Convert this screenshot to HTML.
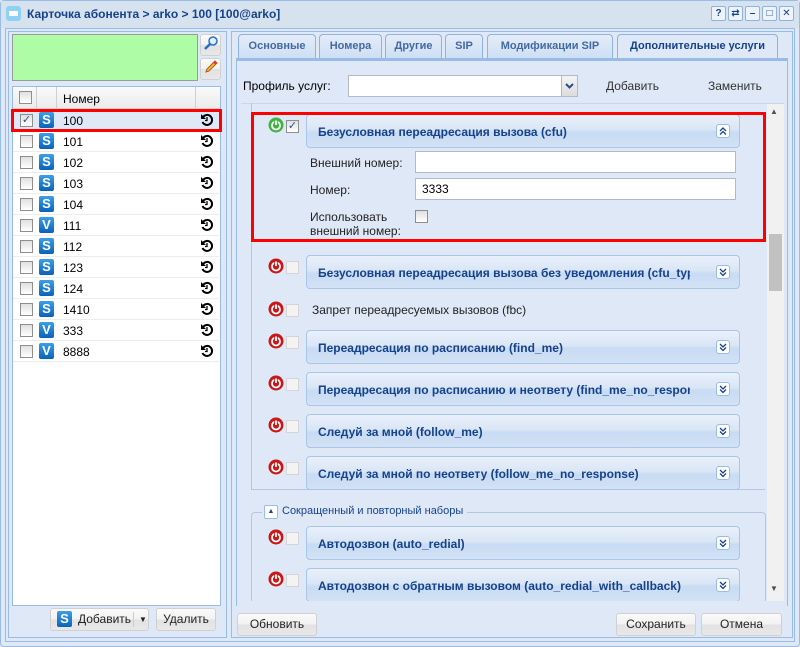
<!DOCTYPE html>
<html><head><meta charset="utf-8"><style>
*{box-sizing:border-box;margin:0;padding:0}
body{width:800px;height:647px;overflow:hidden;background:#dfe8f6;font-family:"Liberation Sans","DejaVu Sans",sans-serif;font-size:12px;color:#000;position:relative}
.a{position:absolute}
.btn{position:absolute;height:23px;border:1px solid #d0d0d0;border-radius:3px;background:linear-gradient(#fafafa,#f2f2f2 50%,#e2e2e2 51%,#e8e8e8);font-size:12px;color:#222;text-align:center;line-height:21px}
.cb{position:absolute;width:13px;height:13px;border:1px solid #8e8e8e;background:linear-gradient(#e0e0e0,#fff)}
.cbd{border-color:#d5d5d5;background:#f3f3f3}
.row{position:absolute;left:13px;width:206px;height:21px;border-bottom:1px solid #ededed;background:#fff}
.row .cb{left:7px;top:4px}
.ic{position:absolute;left:26px;top:2px;width:15px;height:16px;border-radius:2px;background:linear-gradient(#3aa0e8,#0a62b8);color:#fff;font-weight:bold;font-size:13px;line-height:16px;text-align:center}
.row .t{position:absolute;left:50px;top:4px}
.row svg{position:absolute;left:187px;top:3px}
.hd{position:absolute;left:306px;width:434px;height:34px;border:1px solid #a9c5ea;border-radius:4px;background:linear-gradient(#e9f0fa,#dae6f6 45%,#c7dbf3 55%,#d3e2f5);color:#15428b;font-weight:bold;font-size:12px;padding:10px 0 0 11px;white-space:nowrap;overflow:hidden}
.hd span{display:block;max-width:372px;overflow:hidden}
.hd .x{position:absolute;right:9px;top:9px;width:14px;height:14px;border:1px solid #99bbe8;border-radius:3px;background:#fff}
.pw{position:absolute;left:268px}
.tab{position:absolute;top:34px;height:24px;border:1px solid #8db2e3;border-bottom:none;border-radius:4px 4px 0 0;background:linear-gradient(#e4ecf7,#cedff5);color:#416aa3;font-weight:bold;font-size:11px;text-align:center;line-height:23px}
.inp{position:absolute;height:22px;border:1px solid #b5b8c8;background:#fff;padding:3px 6px}
.tb{width:15px;height:15px;border:1px solid #8db2e3;border-radius:2px;background:#eef3fa;color:#15428b;font-size:10px;font-weight:bold;text-align:center;line-height:13px}
</style></head><body>
<div class="a" style="left:0;top:0;width:800px;height:647px;border:1px solid #99bbe8;border-radius:4px"></div>
<div class="a" style="left:1px;top:1px;width:798px;height:27px;background:#d7e2ef"></div>
<div class="a" style="left:6px;top:6px;width:15px;height:15px;border-radius:3px;background:#8fd0f5"><div class="a" style="left:3px;top:5px;width:9px;height:5px;background:#fff"></div></div>
<div class="a" style="left:27px;top:7px;font-weight:bold;color:#15428b;font-size:12px">Карточка абонента &gt; arko &gt; 100 [100@arko]</div>
<div class="a" style="left:711px;top:6px;display:flex;gap:2px">
<div class="tb">?</div><div class="tb">⇄</div><div class="tb">–</div><div class="tb">□</div><div class="tb">✕</div>
</div>
<div class="a" style="left:5px;top:28px;width:790px;height:614px;border:1px solid #99bbe8"></div>

<div class="a" style="left:8px;top:31px;width:219px;height:607px;border:1px solid #99bbe8"></div>
<div class="a" style="left:12px;top:34px;width:186px;height:47px;background:#aefca6;border:1px solid #9a9a9a"></div>
<div class="btn" style="left:200px;top:34px;width:21px;height:22px;padding:0"><svg width="16" height="16" viewBox="0 0 16 16"><circle cx="10" cy="6" r="4" fill="#dff1ff" stroke="#2b6dc6" stroke-width="1.5"/><path d="M7 9L2 14" stroke="#2b6dc6" stroke-width="2.5"/></svg></div>
<div class="btn" style="left:200px;top:58px;width:21px;height:22px;padding:0"><svg width="16" height="16" viewBox="0 0 16 16"><path d="M12 2l2 2-8 8-3 1 1-3z" fill="#f5b73b" stroke="#b35a10"/><path d="M11 3l2 2" stroke="#e33" stroke-width="2"/></svg></div>
<div class="a" style="left:12px;top:86px;width:209px;height:520px;border:1px solid #99bbe8;background:#fff"></div>
<div class="a" style="left:13px;top:87px;width:207px;height:22px;background:linear-gradient(#fafafa,#ebebeb);border-bottom:1px solid #d0d0d0"></div>
<div class="a" style="left:36px;top:87px;width:1px;height:22px;background:#d0d0d0"></div>
<div class="a" style="left:56px;top:87px;width:1px;height:22px;background:#d0d0d0"></div>
<div class="a" style="left:195px;top:87px;width:1px;height:22px;background:#d0d0d0"></div>
<div class="cb" style="left:19px;top:91px"></div>
<div class="a" style="left:63px;top:92px">Номер</div>
<div class="a" style="left:36px;top:110px;width:1px;height:252px;background:#ececec"></div>

<div class="row" style="top:110px;background:#dfe8f6"><div class="cb" style="font-size:11px;line-height:10px;color:#2a4f9a;text-align:center">✓</div><div class="ic">S</div><div class="t">100</div><svg width="14" height="14" viewBox="0 0 14 14"><path d="M3 4A5 5 0 1 1 2.5 9" fill="none" stroke="#000" stroke-width="2"/><path d="M1 1v5h5z" fill="#000"/><path d="M7 4v3.5h-2" fill="none" stroke="#000" stroke-width="1.3"/></svg></div>
<div class="row" style="top:131px"><div class="cb"></div><div class="ic">S</div><div class="t">101</div><svg width="14" height="14" viewBox="0 0 14 14"><path d="M3 4A5 5 0 1 1 2.5 9" fill="none" stroke="#000" stroke-width="2"/><path d="M1 1v5h5z"/><path d="M7 4v3.5h-2" fill="none" stroke="#000" stroke-width="1.3"/></svg></div>
<div class="row" style="top:152px"><div class="cb"></div><div class="ic">S</div><div class="t">102</div><svg width="14" height="14" viewBox="0 0 14 14"><path d="M3 4A5 5 0 1 1 2.5 9" fill="none" stroke="#000" stroke-width="2"/><path d="M1 1v5h5z"/><path d="M7 4v3.5h-2" fill="none" stroke="#000" stroke-width="1.3"/></svg></div>
<div class="row" style="top:173px"><div class="cb"></div><div class="ic">S</div><div class="t">103</div><svg width="14" height="14" viewBox="0 0 14 14"><path d="M3 4A5 5 0 1 1 2.5 9" fill="none" stroke="#000" stroke-width="2"/><path d="M1 1v5h5z"/><path d="M7 4v3.5h-2" fill="none" stroke="#000" stroke-width="1.3"/></svg></div>
<div class="row" style="top:194px"><div class="cb"></div><div class="ic">S</div><div class="t">104</div><svg width="14" height="14" viewBox="0 0 14 14"><path d="M3 4A5 5 0 1 1 2.5 9" fill="none" stroke="#000" stroke-width="2"/><path d="M1 1v5h5z"/><path d="M7 4v3.5h-2" fill="none" stroke="#000" stroke-width="1.3"/></svg></div>
<div class="row" style="top:215px"><div class="cb"></div><div class="ic">V</div><div class="t">111</div><svg width="14" height="14" viewBox="0 0 14 14"><path d="M3 4A5 5 0 1 1 2.5 9" fill="none" stroke="#000" stroke-width="2"/><path d="M1 1v5h5z"/><path d="M7 4v3.5h-2" fill="none" stroke="#000" stroke-width="1.3"/></svg></div>
<div class="row" style="top:236px"><div class="cb"></div><div class="ic">S</div><div class="t">112</div><svg width="14" height="14" viewBox="0 0 14 14"><path d="M3 4A5 5 0 1 1 2.5 9" fill="none" stroke="#000" stroke-width="2"/><path d="M1 1v5h5z"/><path d="M7 4v3.5h-2" fill="none" stroke="#000" stroke-width="1.3"/></svg></div>
<div class="row" style="top:257px"><div class="cb"></div><div class="ic">S</div><div class="t">123</div><svg width="14" height="14" viewBox="0 0 14 14"><path d="M3 4A5 5 0 1 1 2.5 9" fill="none" stroke="#000" stroke-width="2"/><path d="M1 1v5h5z"/><path d="M7 4v3.5h-2" fill="none" stroke="#000" stroke-width="1.3"/></svg></div>
<div class="row" style="top:278px"><div class="cb"></div><div class="ic">S</div><div class="t">124</div><svg width="14" height="14" viewBox="0 0 14 14"><path d="M3 4A5 5 0 1 1 2.5 9" fill="none" stroke="#000" stroke-width="2"/><path d="M1 1v5h5z"/><path d="M7 4v3.5h-2" fill="none" stroke="#000" stroke-width="1.3"/></svg></div>
<div class="row" style="top:299px"><div class="cb"></div><div class="ic">S</div><div class="t">1410</div><svg width="14" height="14" viewBox="0 0 14 14"><path d="M3 4A5 5 0 1 1 2.5 9" fill="none" stroke="#000" stroke-width="2"/><path d="M1 1v5h5z"/><path d="M7 4v3.5h-2" fill="none" stroke="#000" stroke-width="1.3"/></svg></div>
<div class="row" style="top:320px"><div class="cb"></div><div class="ic">V</div><div class="t">333</div><svg width="14" height="14" viewBox="0 0 14 14"><path d="M3 4A5 5 0 1 1 2.5 9" fill="none" stroke="#000" stroke-width="2"/><path d="M1 1v5h5z"/><path d="M7 4v3.5h-2" fill="none" stroke="#000" stroke-width="1.3"/></svg></div>
<div class="row" style="top:341px"><div class="cb"></div><div class="ic">V</div><div class="t">8888</div><svg width="14" height="14" viewBox="0 0 14 14"><path d="M3 4A5 5 0 1 1 2.5 9" fill="none" stroke="#000" stroke-width="2"/><path d="M1 1v5h5z"/><path d="M7 4v3.5h-2" fill="none" stroke="#000" stroke-width="1.3"/></svg></div>
<div class="a" style="left:11px;top:109px;width:211px;height:23px;border:3px solid #f00"></div>

<div class="btn" style="left:50px;top:608px;width:99px;text-align:left;padding-left:27px">Добавить<div class="ic" style="left:6px;top:2px">S</div><div class="a" style="left:82px;top:3px;width:1px;height:15px;background:#ccc"></div><div class="a" style="left:88px;top:0;font-size:8px">▼</div></div>
<div class="btn" style="left:156px;top:608px;width:60px">Удалить</div>

<div class="a" style="left:231px;top:31px;width:562px;height:607px;border:1px solid #99bbe8"></div>
<div class="tab" style="left:238px;width:78px">Основные</div>
<div class="tab" style="left:319px;width:63px">Номера</div>
<div class="tab" style="left:385px;width:57px">Другие</div>
<div class="tab" style="left:445px;width:38px">SIP</div>
<div class="tab" style="left:487px;width:126px">Модификации SIP</div>
<div class="tab" style="left:617px;width:161px;background:#dfe8f6;color:#15428b;height:25px">Дополнительные услуги</div>
<div class="a" style="left:236px;top:58px;width:552px;height:548px;border:1px solid #99bbe8;border-top:3px solid #99bbe8;background:#dfe8f6"></div>
<div class="a" style="left:243px;top:79px">Профиль услуг:</div>
<div class="inp" style="left:348px;top:75px;width:230px"></div>
<div class="a" style="left:561px;top:76px;width:16px;height:20px;background:linear-gradient(#f4f4f4,#dcdcdc);border-left:1px solid #b5b8c8"><svg width="15" height="20" viewBox="0 0 15 20"><path d="M4 8l3.5 3.5L11 8" fill="none" stroke="#2b4a8a" stroke-width="2"/></svg></div>
<div class="a" style="left:606px;top:79px;color:#333">Добавить</div>
<div class="a" style="left:708px;top:79px;color:#333">Заменить</div>

<div class="a" style="left:241px;top:103px;width:543px;height:498px;border-top:1px solid #c9d7ea;background:#dfe8f6"></div>
<div class="a" style="left:251px;top:103px;width:1px;height:387px;background:#b5c7df"></div>
<div class="a" style="left:251px;top:489px;width:514px;height:1px;background:#b5c7df"></div>
<div class="a" style="left:767px;top:104px;width:17px;height:497px;background:#f1f1f1"></div>
<div class="a" style="left:769px;top:234px;width:13px;height:57px;background:#c1c1c1"></div>
<div class="a" style="left:770px;top:107px;font-size:8px;color:#505050">▲</div>
<div class="a" style="left:770px;top:584px;font-size:8px;color:#505050">▼</div>

<svg class="pw" style="top:117px" width="16" height="16" viewBox="0 0 16 16"><circle cx="8" cy="8" r="7.5" fill="#3fb43f"/><circle cx="8" cy="8.5" r="4" fill="none" stroke="#fff" stroke-width="1.8"/><path d="M8 3v5" stroke="#3fb43f" stroke-width="3.5"/><path d="M8 3.5v4.5" stroke="#fff" stroke-width="1.8"/></svg>
<div class="cb" style="left:286px;top:120px;font-size:11px;line-height:10px;color:#2a4f9a;text-align:center">✓</div>
<div class="hd" style="top:114px"><span>Безусловная переадресация вызова (cfu)</span><div class="x"><svg width="12" height="12" viewBox="0 0 12 12"><path d="M3 6l3-3 3 3M3 9.5l3-3 3 3" fill="none" stroke="#15428b" stroke-width="1.3"/></svg></div></div>
<div class="a" style="left:310px;top:156px;color:#222">Внешний номер:</div>
<div class="inp" style="left:415px;top:151px;width:321px"></div>
<div class="a" style="left:310px;top:183px;color:#222">Номер:</div>
<div class="inp" style="left:415px;top:178px;width:321px">3333</div>
<div class="a" style="left:310px;top:210px;color:#222;line-height:14px">Использовать<br>внешний номер:</div>
<div class="cb" style="left:415px;top:210px"></div>
<div class="a" style="left:251px;top:112px;width:515px;height:130px;border:3px solid #f00"></div>

<svg class="pw" style="top:258px" width="16" height="16" viewBox="0 0 16 16"><circle cx="8" cy="8" r="7.5" fill="#c81818"/><circle cx="8" cy="8.5" r="4" fill="none" stroke="#fff" stroke-width="1.8"/><path d="M8 3v5" stroke="#c81818" stroke-width="3.5"/><path d="M8 3.5v4.5" stroke="#fff" stroke-width="1.8"/></svg>
<div class="cb cbd" style="left:286px;top:261px"></div>
<div class="hd" style="top:255px"><span>Безусловная переадресация вызова без уведомления (cfu_type2)</span><div class="x"><svg width="12" height="12" viewBox="0 0 12 12"><path d="M3 3l3 3 3-3M3 6.5l3 3 3-3" fill="none" stroke="#15428b" stroke-width="1.3"/></svg></div></div>

<svg class="pw" style="top:301px" width="16" height="16" viewBox="0 0 16 16"><circle cx="8" cy="8" r="7.5" fill="#c81818"/><circle cx="8" cy="8.5" r="4" fill="none" stroke="#fff" stroke-width="1.8"/><path d="M8 3v5" stroke="#c81818" stroke-width="3.5"/><path d="M8 3.5v4.5" stroke="#fff" stroke-width="1.8"/></svg>
<div class="cb cbd" style="left:286px;top:304px"></div>
<div class="a" style="left:312px;top:303px;color:#222">Запрет переадресуемых вызовов (fbc)</div>

<svg class="pw" style="top:333px" width="16" height="16" viewBox="0 0 16 16"><circle cx="8" cy="8" r="7.5" fill="#c81818"/><circle cx="8" cy="8.5" r="4" fill="none" stroke="#fff" stroke-width="1.8"/><path d="M8 3v5" stroke="#c81818" stroke-width="3.5"/><path d="M8 3.5v4.5" stroke="#fff" stroke-width="1.8"/></svg>
<div class="cb cbd" style="left:286px;top:336px"></div>
<div class="hd" style="top:330px"><span>Переадресация по расписанию (find_me)</span><div class="x"><svg width="12" height="12" viewBox="0 0 12 12"><path d="M3 3l3 3 3-3M3 6.5l3 3 3-3" fill="none" stroke="#15428b" stroke-width="1.3"/></svg></div></div>

<svg class="pw" style="top:375px" width="16" height="16" viewBox="0 0 16 16"><circle cx="8" cy="8" r="7.5" fill="#c81818"/><circle cx="8" cy="8.5" r="4" fill="none" stroke="#fff" stroke-width="1.8"/><path d="M8 3v5" stroke="#c81818" stroke-width="3.5"/><path d="M8 3.5v4.5" stroke="#fff" stroke-width="1.8"/></svg>
<div class="cb cbd" style="left:286px;top:378px"></div>
<div class="hd" style="top:372px"><span>Переадресация по расписанию и неответу (find_me_no_response)</span><div class="x"><svg width="12" height="12" viewBox="0 0 12 12"><path d="M3 3l3 3 3-3M3 6.5l3 3 3-3" fill="none" stroke="#15428b" stroke-width="1.3"/></svg></div></div>

<svg class="pw" style="top:417px" width="16" height="16" viewBox="0 0 16 16"><circle cx="8" cy="8" r="7.5" fill="#c81818"/><circle cx="8" cy="8.5" r="4" fill="none" stroke="#fff" stroke-width="1.8"/><path d="M8 3v5" stroke="#c81818" stroke-width="3.5"/><path d="M8 3.5v4.5" stroke="#fff" stroke-width="1.8"/></svg>
<div class="cb cbd" style="left:286px;top:420px"></div>
<div class="hd" style="top:414px"><span>Следуй за мной (follow_me)</span><div class="x"><svg width="12" height="12" viewBox="0 0 12 12"><path d="M3 3l3 3 3-3M3 6.5l3 3 3-3" fill="none" stroke="#15428b" stroke-width="1.3"/></svg></div></div>

<svg class="pw" style="top:459px" width="16" height="16" viewBox="0 0 16 16"><circle cx="8" cy="8" r="7.5" fill="#c81818"/><circle cx="8" cy="8.5" r="4" fill="none" stroke="#fff" stroke-width="1.8"/><path d="M8 3v5" stroke="#c81818" stroke-width="3.5"/><path d="M8 3.5v4.5" stroke="#fff" stroke-width="1.8"/></svg>
<div class="cb cbd" style="left:286px;top:462px"></div>
<div class="hd" style="top:456px"><span>Следуй за мной по неответу (follow_me_no_response)</span><div class="x"><svg width="12" height="12" viewBox="0 0 12 12"><path d="M3 3l3 3 3-3M3 6.5l3 3 3-3" fill="none" stroke="#15428b" stroke-width="1.3"/></svg></div></div>

<div class="a" style="left:251px;top:512px;width:515px;height:92px;border:1px solid #b5c7df;border-radius:4px"></div>
<div class="a" style="left:262px;top:505px;width:205px;height:14px;background:#dfe8f6"></div>
<div class="a" style="left:264px;top:505px;width:14px;height:14px;border:1px solid #99bbe8;border-radius:2px;background:#fff;color:#15428b;font-size:7px;text-align:center;line-height:12px">▲</div>
<div class="a" style="left:282px;top:505px;color:#15428b;font-size:11px">Сокращенный и повторный наборы</div>

<svg class="pw" style="top:529px" width="16" height="16" viewBox="0 0 16 16"><circle cx="8" cy="8" r="7.5" fill="#c81818"/><circle cx="8" cy="8.5" r="4" fill="none" stroke="#fff" stroke-width="1.8"/><path d="M8 3v5" stroke="#c81818" stroke-width="3.5"/><path d="M8 3.5v4.5" stroke="#fff" stroke-width="1.8"/></svg>
<div class="cb cbd" style="left:286px;top:532px"></div>
<div class="hd" style="top:526px"><span>Автодозвон (auto_redial)</span><div class="x"><svg width="12" height="12" viewBox="0 0 12 12"><path d="M3 3l3 3 3-3M3 6.5l3 3 3-3" fill="none" stroke="#15428b" stroke-width="1.3"/></svg></div></div>

<svg class="pw" style="top:571px" width="16" height="16" viewBox="0 0 16 16"><circle cx="8" cy="8" r="7.5" fill="#c81818"/><circle cx="8" cy="8.5" r="4" fill="none" stroke="#fff" stroke-width="1.8"/><path d="M8 3v5" stroke="#c81818" stroke-width="3.5"/><path d="M8 3.5v4.5" stroke="#fff" stroke-width="1.8"/></svg>
<div class="cb cbd" style="left:286px;top:574px"></div>
<div class="hd" style="top:568px"><span style="max-width:400px">Автодозвон с обратным вызовом (auto_redial_with_callback)</span><div class="x"><svg width="12" height="12" viewBox="0 0 12 12"><path d="M3 3l3 3 3-3M3 6.5l3 3 3-3" fill="none" stroke="#15428b" stroke-width="1.3"/></svg></div></div>
<div class="a" style="left:237px;top:601px;width:550px;height:5px;background:#dfe8f6"></div>

<div class="btn" style="left:237px;top:613px;width:80px">Обновить</div>
<div class="btn" style="left:616px;top:613px;width:80px">Сохранить</div>
<div class="btn" style="left:701px;top:613px;width:81px">Отмена</div>
</body></html>
